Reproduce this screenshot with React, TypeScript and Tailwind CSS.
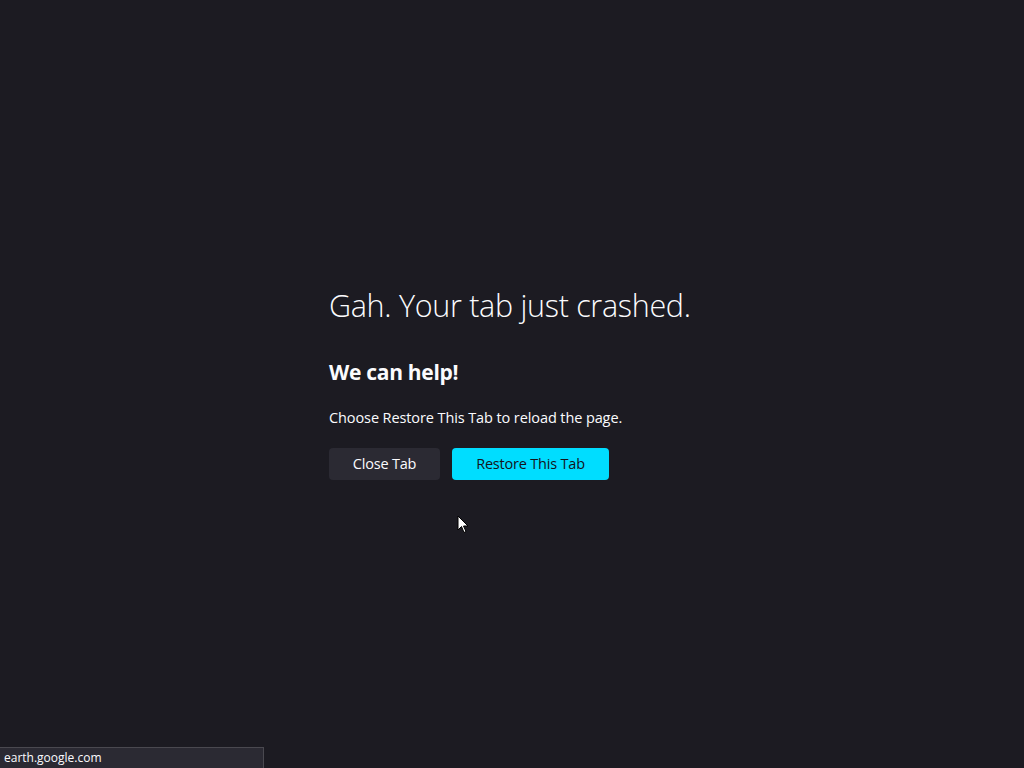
import { memo } from 'react'

const copy = {
  title: 'Gah. Your tab just crashed.',
  subtitle: 'We can help!',
  message: 'Choose Restore This Tab to reload the page.',
  close: 'Close Tab',
  restore: 'Restore This Tab',
  status: 'earth.google.com',
}

function TabCrashed() {
  return (
    <div className="relative h-[768px] overflow-hidden bg-[#1c1b22] text-[#fbfbfe] font-['Open_Sans',sans-serif]">
      <div className="flex justify-center pt-[285px]">
        <div className="w-[366px]">
          <h1 className="text-[30.5px] font-light leading-[40px] whitespace-nowrap tracking-[-0.3px]">
            {copy.title}
          </h1>
          <h2 className="mt-[33px] text-[21px] font-bold leading-[28px] tracking-[-0.3px]">
            {copy.subtitle}
          </h2>
          <p className="mt-[22px] text-[14.5px] leading-[20px] tracking-[-0.1px]">
            {copy.message}
          </p>
          <div className="mt-[20px] flex gap-3">
            <button className="h-8 w-[111px] rounded bg-[#2b2a33] text-[14.5px] font-medium tracking-[-0.2px] text-[#fbfbfe]">
              {copy.close}
            </button>
            <button className="h-8 w-[157px] rounded bg-[#00ddff] text-[14.5px] font-medium tracking-[-0.2px] text-[#15141a]">
              {copy.restore}
            </button>
          </div>
        </div>
      </div>

      {/* mouse pointer */}
      <svg className="absolute left-[457px] top-[515px]" width="12" height="19" viewBox="0 0 12 19">
        <path d="M1 1 L1 15 L4.5 11.5 L7 17.5 L9 16.5 L6.5 11 L11 11 Z" fill="#fff" stroke="#000" strokeWidth="1" />
      </svg>

      {/* status panel */}
      <div className="absolute bottom-0 left-0 flex h-[21px] w-[264px] items-center border-t border-r border-[#4a4950] bg-[#2b2a33] pl-1 text-[12px] text-[#fbfbfe]">
        {copy.status}
      </div>
    </div>
  )
}

export default memo(TabCrashed)
